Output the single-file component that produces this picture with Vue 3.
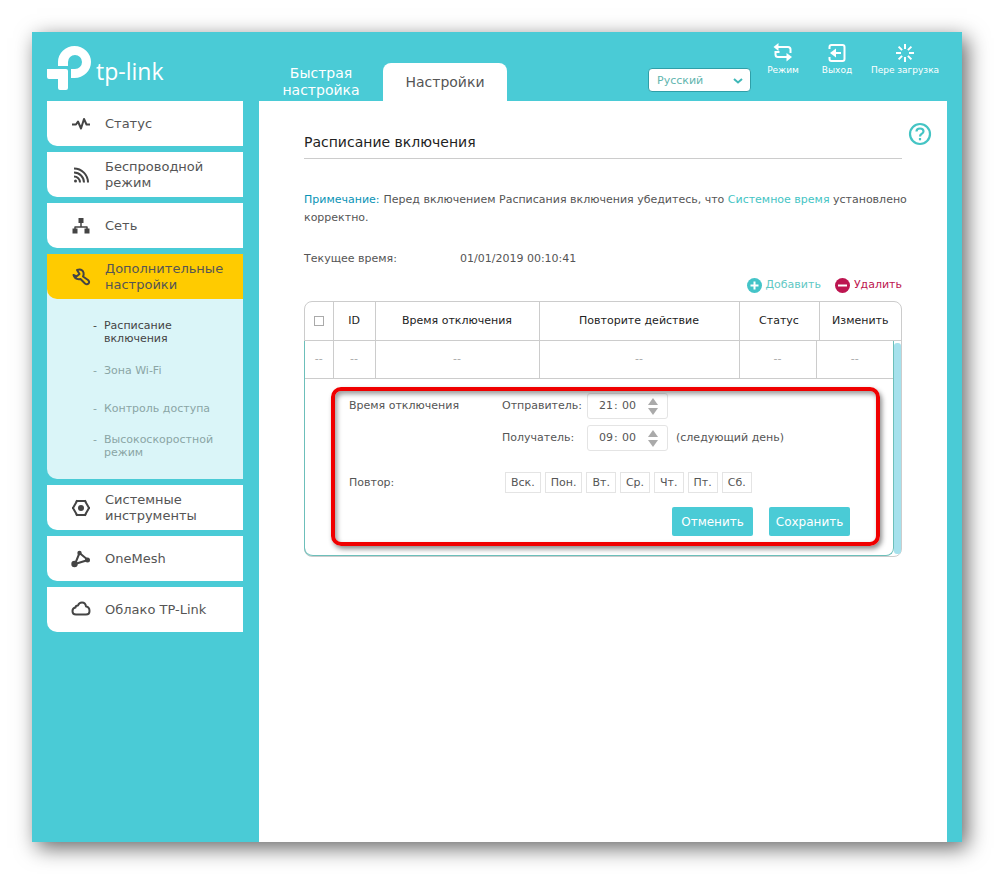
<template>
  <div class="page">
    <div class="router">
      <header class="top">
        <a class="logo" href="#" aria-label="tp-link">
          <svg width="45" height="46" viewBox="0 0 45 46" aria-hidden="true">
            <path d="M0 23h19a2 2 0 0 1 2 2v17a2 2 0 0 1-2 2h-6a2 2 0 0 1-2-2v-9H2a2 2 0 0 1-2-2z" fill="#fff" />
            <path d="M11 20v-4a16.500 16 0 1 1 16.500 16H24v-9h4a7 7 0 1 0-7-7v4z" fill="#fff" />
          </svg>
          <span>tp-link</span>
        </a>
        <nav class="tabs">
          <a href="#" class="tab">Быстрая настройка</a>
          <a href="#" class="tab active">Настройки</a>
        </nav>
        <div class="tools">
          <div class="lang">
            <select v-model="lang" aria-label="Язык">
              <option>Русский</option>
              <option>English</option>
            </select>
            <svg width="10" height="6" viewBox="0 0 10 6"><path d="M1 1l4 3.500L9 1" fill="none" stroke="#3fb8b8" stroke-width="2" /></svg>
          </div>
          <button class="tool mode">
            <svg width="20" height="20" viewBox="0 0 20 20" fill="none" stroke="#fff" stroke-width="2">
              <path d="M4 4h11q2.500 0 2.500 2.500v3.500M17 14H5q-2.500 0-2.500-2.500V9h4" />
              <path d="M5.500 0L.500 4l5 4zM13.500 10l5.500 4-5.500 4.500z" fill="#fff" stroke="none" />
            </svg>
            Режим
          </button>
          <button class="tool exit">
            <svg width="20" height="20" viewBox="0 0 20 20" fill="none" stroke="#fff" stroke-width="2">
              <path d="M2.500 6V4q0-2 2-2h11q2 0 2 2v12q0 2-2 2h-11q-2 0-2-2v-2" />
              <path d="M8 10h6" />
              <path d="M3 10l6-4.500v9z" fill="#fff" stroke="none" />
            </svg>
            Выход
          </button>
          <button class="tool reboot">
            <svg width="20" height="20" viewBox="0 0 20 20" stroke="#fff" stroke-width="2">
              <path d="M10 1v5M10 14v5M1 10h5M14 10h5M3.600 3.600l3.500 3.500M12.900 12.900l3.500 3.500M3.600 16.400l3.500-3.500M12.900 7.100l3.500-3.500" />
            </svg>
            Пере загрузка
          </button>
        </div>
      </header>

      <div class="body">
        <aside class="side">
          <template v-for="item in menu" :key="item.icon">
            <a href="#" class="menu-item" :class="{ active: item.children }">
              <svg width="20" height="20" viewBox="0 0 20 20" fill="none" stroke="#444" stroke-width="2" stroke-linejoin="round">
                <path v-if="item.icon === 'status'" d="M1 10.500h4l2-3 3 7 3-9.500 2.500 5.500H19" />
                <template v-else-if="item.icon === 'wifi'">
                  <path d="M3 3.500a14 14 0 0 1 14 14M3 7.500a10 10 0 0 1 10 10M3 11.500a6 6 0 0 1 6 6" />
                  <circle cx="4.500" cy="16" r="1.500" fill="#444" stroke="none" />
                </template>
                <template v-else-if="item.icon === 'net'">
                  <path d="M10 6v5M4 14v-3h12v3" stroke-width="1.500" />
                  <path d="M7.500 2h5v5h-5zM1.500 12.500h5v5h-5zM13.500 12.500h5v5h-5z" fill="#444" stroke="none" />
                </template>
                <path v-else-if="item.icon === 'tools'" d="M6 3q5-1.500 6.500 2.500q.5 2-.5 4l5 3.500q2 2 .5 3.500t-3.500 0L9.500 12Q4 13 2.500 8l3 1.500 3-2.500z" />
                <template v-else-if="item.icon === 'system'">
                  <path d="M6 3h8l4 7-4 7H6l-4-7z" />
                  <circle cx="10" cy="10" r="3" fill="#444" stroke="none" />
                  <path d="M5 2.500l1 1M15 2.500l-1 1M1 10h2M17 10h2M5 17.500l1-1M15 17.500l-1-1" />
                </template>
                <template v-else-if="item.icon === 'mesh'">
                  <path d="M8.500 4L4 15l13-4z" />
                  <g fill="#444" stroke="none"><circle cx="8.500" cy="4" r="2.200" /><circle cx="3.500" cy="15" r="3.200" /><circle cx="16.500" cy="11" r="2.500" /></g>
                </template>
                <path v-else d="M5 14.500q-3.500 0-3.500-3.500 0-3 3-3.500 0-2 2.500-2Q8 2.500 11 2.500q3.500 0 4 4 3.500.5 3.500 4.500 0 3.500-3.500 3.500z" />
              </svg>
              <span>{{ item.label }}</span>
            </a>
            <ul v-if="item.children" class="submenu">
              <li v-for="(sub, idx) in item.children" :key="sub" :class="{ current: idx === 0 }">
                <a href="#">{{ sub }}</a>
              </li>
            </ul>
          </template>
        </aside>

        <main class="content">
          <button class="help" aria-label="Справка">
            <svg width="24" height="24" viewBox="0 0 24 24" fill="none" stroke="#44c4c4" stroke-width="2.200">
              <circle cx="12" cy="12" r="10" />
              <path d="M8.500 9.500q0-3 3.500-3t3.500 2.800q0 1.700-2 2.700-1.500.8-1.500 2.500" />
              <path d="M12 16v2.300" />
            </svg>
          </button>
          <h1>Расписание включения</h1>
          <p class="note"><b>Примечание:</b>Перед включением Расписания включения убедитесь, что <a href="#">Системное время</a> установлено корректно.</p>
          <div class="now"><span>Текущее время:</span><span>01/01/2019 00:10:41</span></div>
          <div class="actions">
            <button class="add">
              <svg width="15" height="15" viewBox="0 0 15 15"><circle cx="7.500" cy="7.500" r="7.500" fill="#44c4c8" /><path d="M7.500 3.500v8M3.500 7.500h8" stroke="#fff" stroke-width="2" /></svg>
              Добавить
            </button>
            <button class="del">
              <svg width="15" height="15" viewBox="0 0 15 15"><circle cx="7.500" cy="7.500" r="7.500" fill="#bd1550" /><path d="M3 7.500h9" stroke="#fff" stroke-width="2" /></svg>
              Удалить
            </button>
          </div>

          <div class="grid">
            <table class="head">
              <colgroup><col class="c-check" /><col class="c-id" /><col class="c-time" /><col /><col class="c-status" /><col class="c-edit" /></colgroup>
              <thead>
                <tr>
                  <th><input type="checkbox" aria-label="Выбрать все" /></th>
                  <th v-for="col in columns" :key="col">{{ col }}</th>
                </tr>
              </thead>
            </table>
            <div class="scroll">
              <div class="editor">
                <table class="rows">
                  <colgroup><col class="c-check" /><col class="c-id" /><col class="c-time" /><col /><col class="c-state" /><col class="c-state" /></colgroup>
                  <tbody>
                    <tr><td v-for="n in 6" :key="n">--</td></tr>
                  </tbody>
                </table>
                <form class="form" @submit.prevent>
                  <div class="line times">
                    <span class="name">Время отключения</span>
                    <div class="fields">
                      <div v-for="t in times" :key="t.id" class="time-row">
                        <label :for="t.id">{{ t.label }}</label>
                        <div class="time">
                          <input :id="t.id" v-model="t.h" /><span>:</span><input v-model="t.m" :aria-label="t.label + ' минуты'" />
                          <div class="spin">
                            <button type="button" aria-label="Больше"><svg width="10" height="7" viewBox="0 0 10 7"><path d="M5 0l5 7H0z" fill="#aaa" /></svg></button>
                            <button type="button" aria-label="Меньше"><svg width="10" height="7" viewBox="0 0 10 7"><path d="M0 0h10L5 7z" fill="#aaa" /></svg></button>
                          </div>
                        </div>
                        <span>{{ t.hint }}</span>
                      </div>
                    </div>
                  </div>
                  <div class="line repeat">
                    <span class="name">Повтор:</span>
                    <div class="days"><button v-for="d in days" :key="d" type="button">{{ d }}</button></div>
                  </div>
                  <div class="submit">
                    <button type="button">Отменить</button>
                    <button type="submit">Сохранить</button>
                  </div>
                  <div class="highlight"></div>
                </form>
              </div>
              <div class="bar"></div>
            </div>
          </div>
        </main>
      </div>
    </div>
  </div>
</template>

<script setup>
import { ref } from 'vue'

const lang = ref('Русский')
const menu = [
  { icon: 'status', label: 'Статус' },
  { icon: 'wifi', label: 'Беспроводной режим' },
  { icon: 'net', label: 'Сеть' },
  {
    icon: 'tools',
    label: 'Дополнительные настройки',
    children: ['Расписание включения', 'Зона Wi-Fi', 'Контроль доступа', 'Высокоскоростной режим']
  },
  { icon: 'system', label: 'Системные инструменты' },
  { icon: 'mesh', label: 'OneMesh' },
  { icon: 'cloud', label: 'Облако TP-Link' }
]
const columns = ['ID', 'Время отключения', 'Повторите действие', 'Статус', 'Изменить']
const times = ref([
  { id: 'from', label: 'Отправитель:', h: '21', m: '00', hint: '' },
  { id: 'to', label: 'Получатель:', h: '09', m: '00', hint: '(следующий день)' }
])
const days = ['Вск.', 'Пон.', 'Вт.', 'Ср.', 'Чт.', 'Пт.', 'Сб.']
</script>

<style>
body {
  background: #fff;
}
</style>

<style scoped>
* {
  box-sizing: border-box;
}
.page {
  padding: 32px;
  font: 11px/18px Verdana, "DejaVu Sans", sans-serif;
  color: #555;
}
a {
  color: inherit;
  text-decoration: none;
}
button {
  font: inherit;
  color: inherit;
  background: none;
  border: none;
  padding: 0;
  cursor: pointer;
}
svg {
  display: block;
  flex: none;
}
.router {
  display: flex;
  flex-direction: column;
  min-height: calc(100vh - 64px);
  padding: 0 15px;
  background: #4acbd6;
  box-shadow: 5px 6px 20px rgba(0, 0, 0, 0.6);
}
.top {
  display: flex;
  height: 69px;
}
.logo {
  display: flex;
  width: 212px;
  padding-top: 14px;
  color: #fff;
}
.logo span {
  margin: 12px 0 0 4px;
  font: 500 23px/26px "Open Sans", sans-serif;
}
.tabs {
  display: flex;
  align-items: flex-end;
}
.tab {
  display: flex;
  align-items: center;
  justify-content: center;
  width: 124px;
  height: 38px;
  font-size: 14px;
  line-height: 17px;
  text-align: center;
  color: #fff;
}
.tab.active {
  background: #fff;
  color: #555;
  border-radius: 8px 8px 0 0;
}
.tools {
  display: flex;
  align-items: flex-start;
  margin-left: auto;
  padding: 11px 4px 0 0;
}
.lang {
  position: relative;
  margin: 25px 12px 0 0;
}
.lang select {
  appearance: none;
  display: block;
  width: 103px;
  height: 24px;
  padding: 1px 8px 0;
  font: inherit;
  color: #5fb5ae;
  background: #fff;
  border: 1px solid #2f9fa8;
  border-radius: 4px;
}
.lang svg {
  position: absolute;
  right: 8px;
  top: 10px;
  pointer-events: none;
}
.tool {
  display: flex;
  flex-direction: column;
  align-items: center;
  font-size: 9px;
  line-height: 14px;
  color: #fff;
  white-space: nowrap;
}
.mode {
  width: 40px;
}
.exit {
  width: 40px;
  margin: 0 10px 0 14px;
}
.reboot {
  width: 76px;
}
.body {
  display: flex;
  flex: 1;
  gap: 16px;
}
.side {
  flex: none;
  width: 196px;
}
.menu-item {
  display: flex;
  align-items: center;
  gap: 14px;
  height: 45px;
  margin-bottom: 6px;
  padding: 0 10px 0 24px;
  background: #fff;
  border-radius: 0 0 0 10px;
  font-size: 13px;
  line-height: 16px;
}
.menu-item.active {
  position: relative;
  margin-bottom: -10px;
  background: #ffcb00;
}
.submenu {
  height: 190px;
  margin: 0 0 6px;
  padding: 24px 20px 0 46px;
  list-style: none;
  background: #daf5f8;
  border-radius: 0 0 0 10px;
  line-height: 13px;
  color: #8aa5a5;
}
.submenu li {
  display: flex;
  align-items: center;
  gap: 7px;
  height: 38px;
}
.submenu li::before {
  content: "-";
  align-self: flex-start;
  margin-top: 6px;
}
.submenu li:nth-child(2)::before,
.submenu li:nth-child(3)::before {
  align-self: center;
  margin: 0;
}
.submenu .current {
  color: #444;
}
.content {
  position: relative;
  flex: 1;
  min-width: 0;
  padding: 32px 45px 40px;
  background: #fff;
}
.help {
  position: absolute;
  top: 21px;
  right: 15px;
}
h1 {
  margin: 0;
  padding-bottom: 7px;
  border-bottom: 1px solid #ccc;
  font-size: 14px;
  line-height: 18px;
  font-weight: 400;
  color: #222;
}
.note {
  margin: 32px -12px 0 0;
}
.note b {
  margin-right: 4px;
  font-weight: 400;
  color: #0a93b5;
}
.note a {
  color: #44c4c4;
}
.now {
  display: flex;
  margin-top: 23px;
}
.now span:first-child {
  width: 156px;
}
.actions {
  display: flex;
  justify-content: flex-end;
  gap: 14px;
  margin: 8px 0 7px;
}
.actions button {
  display: flex;
  align-items: center;
  gap: 4px;
}
.add {
  color: #5fc8c4;
}
.del {
  color: #bd1550;
}
.grid {
  border: 1px solid #ccc;
  border-radius: 8px;
}
table {
  width: 100%;
  table-layout: fixed;
  border-collapse: collapse;
}
th,
td {
  padding: 0;
  border-left: 1px solid #ccc;
  border-bottom: 1px solid #ccc;
  font-weight: 400;
  text-align: center;
}
th:first-child,
td:first-child {
  border-left: none;
}
th {
  height: 38px;
  color: #222;
}
td {
  height: 38px;
  color: #aaa;
}
.c-check {
  width: 28px;
}
.c-id {
  width: 42px;
}
.c-time {
  width: 164px;
}
.c-status {
  width: 80px;
}
.c-edit {
  width: 82px;
}
.c-state {
  width: 77px;
}
th input {
  appearance: none;
  display: block;
  width: 10px;
  height: 10px;
  margin: 0 auto;
  border: 1px solid #aaa;
}
.scroll {
  display: flex;
}
.editor {
  flex: 1;
  border: solid #6cbfba;
  border-width: 0 1px 1px 0;
  border-radius: 0 0 8px 8px;
  box-shadow: -1px 0 #6cbfba;
}
.bar {
  width: 7px;
  margin: 2px 0;
  background: #a6e1ec;
  border-radius: 3px;
}
.form {
  position: relative;
  padding: 14px 43px 19px 44px;
}
.line {
  display: flex;
}
.name {
  width: 153px;
}
.times .name {
  margin-top: 4px;
}
.time-row {
  display: flex;
  align-items: center;
  height: 26px;
  margin-bottom: 6px;
}
.time-row label {
  width: 85px;
}
.time {
  display: flex;
  align-items: center;
  width: 81px;
  height: 26px;
  margin-right: 8px;
  padding-left: 11px;
  border: 1px solid #e4e4e4;
  border-radius: 3px;
}
.time input {
  width: 15px;
  padding: 0;
  border: none;
  background: none;
  font: inherit;
  color: inherit;
}
.time span {
  width: 8px;
}
.spin {
  display: flex;
  flex-direction: column;
  gap: 3px;
  margin-left: 11px;
}
.repeat {
  align-items: center;
  margin-top: 15px;
}
.days {
  display: flex;
  gap: 4px;
  padding-left: 3px;
}
.days button {
  height: 21px;
  padding: 0 5px;
  border: 1px solid #e4e4e4;
}
.submit {
  display: flex;
  justify-content: flex-end;
  gap: 16px;
  margin-top: 14px;
}
.submit button {
  width: 81px;
  height: 29px;
  font-size: 12px;
  color: #fff;
  background: #4acbd6;
  border-radius: 2px;
}
/* frame drawn over the editor fields */
.highlight {
  position: absolute;
  inset: 8px 13px 9px 26px;
  border: 4px solid #f00000;
  border-radius: 10px;
  box-shadow: 2px 3px 5px rgba(0, 0, 0, 0.45), inset 2px 3px 5px rgba(0, 0, 0, 0.4);
  pointer-events: none;
}
</style>
